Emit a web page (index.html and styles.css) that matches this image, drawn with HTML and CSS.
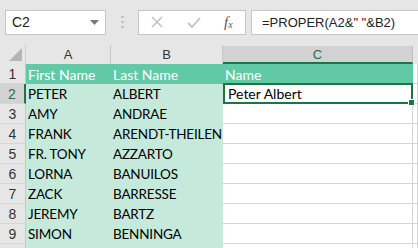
FILE: index.html
```html
<!DOCTYPE html>
<html lang="en">
<head>
  <meta charset="UTF-8">
  <title>PROPER</title>
  <link rel="stylesheet" href="styles.css">
</head>
<body>
  <!-- formula bar -->
  <div class="toolbar">
    <div class="namebox">
      <span>C2</span>
      <svg class="drop" width="9" height="5" viewBox="0 0 9 5"><path d="M0 0h9L4.5 5z" fill="#777"/></svg>
    </div>
    <div class="grip">
      <svg width="3" height="12" viewBox="0 0 3 12"><rect x="0.5" y="0" width="2" height="2" fill="#b5b5b5"/><rect x="0.5" y="5" width="2" height="2" fill="#b5b5b5"/><rect x="0.5" y="10" width="2" height="2" fill="#b5b5b5"/></svg>
    </div>
    <div class="fxbox">
      <svg class="btn" width="12" height="12" viewBox="0 0 12 12"><path d="M1 1L11 11M11 1L1 11" stroke="#c2c2c2" stroke-width="1.6"/></svg>
      <svg class="btn" width="14" height="11" viewBox="0 0 14 11"><path d="M1 6l4 4L13 1" stroke="#c2c2c2" stroke-width="1.8" fill="none"/></svg>
      <span class="fx">f<sub>x</sub></span>
    </div>
    <div class="formula">=PROPER(A2&amp;" "&amp;B2)</div>
  </div>

  <!-- sheet grid -->
  <div class="sheet">
    <div class="corner"><span class="tri"></span></div>
    <div class="colhead">A</div>
    <div class="colhead">B</div>
    <div class="colhead active">C</div>
    <div class="colhead rest"></div>

    <div class="rowhead">1</div>
    <div class="cell th">First Name</div>
    <div class="cell th">Last Name</div>
    <div class="cell th">Name</div>
    <div class="cell blank"></div>

    <div class="rowhead active">2</div>
    <div class="cell td">PETER</div>
    <div class="cell td">ALBERT</div>
    <div class="cell blank selected">Peter Albert</div>
    <div class="cell blank"></div>

    <div class="rowhead">3</div>
    <div class="cell td">AMY</div>
    <div class="cell td">ANDRAE</div>
    <div class="cell blank"></div>
    <div class="cell blank"></div>

    <div class="rowhead">4</div>
    <div class="cell td">FRANK</div>
    <div class="cell td">ARENDT-THEILEN</div>
    <div class="cell blank"></div>
    <div class="cell blank"></div>

    <div class="rowhead">5</div>
    <div class="cell td">FR. TONY</div>
    <div class="cell td">AZZARTO</div>
    <div class="cell blank"></div>
    <div class="cell blank"></div>

    <div class="rowhead">6</div>
    <div class="cell td">LORNA</div>
    <div class="cell td">BANUILOS</div>
    <div class="cell blank"></div>
    <div class="cell blank"></div>

    <div class="rowhead">7</div>
    <div class="cell td">ZACK</div>
    <div class="cell td">BARRESSE</div>
    <div class="cell blank"></div>
    <div class="cell blank"></div>

    <div class="rowhead">8</div>
    <div class="cell td">JEREMY</div>
    <div class="cell td">BARTZ</div>
    <div class="cell blank"></div>
    <div class="cell blank"></div>

    <div class="rowhead">9</div>
    <div class="cell td">SIMON</div>
    <div class="cell td">BENNINGA</div>
    <div class="cell blank"></div>
    <div class="cell blank"></div>

    <div class="rowhead"></div>
    <div class="cell td"></div>
    <div class="cell td"></div>
    <div class="cell blank"></div>
    <div class="cell blank"></div>
  </div>
</body>
</html>
```

FILE: styles.css
```css
body {
  margin: 0;
  background: #fff;
  font-family: Lato, "Liberation Sans", sans-serif;
  overflow: hidden;
  height: 248px;
}
.toolbar {
  display: flex;
  align-items: center;
  height: 44px;
  padding: 0 0 0 5px;
  background: #e6e6e6;
  box-sizing: border-box;
}
.namebox {
  display: flex;
  align-items: center;
  justify-content: space-between;
  width: 101px;
  height: 25px;
  box-sizing: border-box;
  background: #fff;
  border: 1px solid #c6c6c6;
  padding: 0 6px 0 6px;
  font-family: "Liberation Sans", sans-serif;
  font-size: 14px;
  color: #222;
}
.grip {
  width: 32px;
  display: flex;
  justify-content: center;
}
.fxbox {
  display: flex;
  align-items: center;
  width: 108px;
  height: 25px;
  box-sizing: border-box;
  background: #fff;
  border: 1px solid #c6c6c6;
  padding-left: 12px;
}
.fxbox .btn {
  margin-right: 24px;
}
.fxbox .btn + .btn {
  margin-right: 23px;
}
.fx {
  font-family: "Liberation Serif", serif;
  font-style: italic;
  font-size: 15px;
  color: #555;
}
.fx sub {
  font-size: 10px;
  vertical-align: -1px;
}
.formula {
  flex: 1;
  height: 25px;
  margin-left: 5px;
  box-sizing: border-box;
  background: #fff;
  border: 1px solid #c6c6c6;
  border-right: none;
  padding-left: 10px;
  line-height: 23px;
  font-family: "Liberation Sans", sans-serif;
  font-size: 13px;
  color: #222;
}
.sheet {
  display: grid;
  grid-template-columns: 26px 85px 112px 190px 1fr;
  grid-auto-rows: 20px;
  height: 204px;
  overflow: hidden;
  background: #e6e6e6;
}
.sheet > div {
  box-sizing: border-box;
}
.corner {
  display: flex;
  align-items: flex-end;
  justify-content: flex-end;
  padding: 0 3px 3px 0;
  border-right: 1px solid #cfcfcf;
}
.tri {
  width: 0;
  height: 0;
  border-left: 13px solid transparent;
  border-bottom: 13px solid #b4b4b4;
}
.colhead {
  display: flex;
  align-items: center;
  justify-content: center;
  margin-top: 1px;
  font-family: "Liberation Sans", sans-serif;
  font-size: 13px;
  color: #333;
  border-right: 1px solid #c8c8c8;
}
.colhead.active {
  margin-top: 2px;
  background: #d2d2d2;
  color: #217346;
  border-bottom: 2px solid #217346;
  border-right: 1px solid #bdbdbd;
}
.colhead.rest {
  border-right: none;
}
.rowhead {
  display: flex;
  align-items: center;
  justify-content: center;
  font-family: "Liberation Sans", sans-serif;
  font-size: 14px;
  color: #333;
  background: #e6e6e6;
  border-right: 1px solid #c8c8c8;
  border-bottom: 1px solid #d6d6d6;
}
.rowhead.active {
  background: #d2d2d2;
  color: #217346;
  border-right: 2px solid #217346;
}
.cell {
  display: flex;
  align-items: center;
  padding-left: 2px;
  font-size: 14px;
  white-space: nowrap;
  overflow: hidden;
}
.th {
  background: #62c9a7;
  color: #fff;
}
.td {
  background: #c5eadc;
  color: #000;
  font-size: 13.5px;
  letter-spacing: -0.2px;
}
.blank {
  background: #fff;
  color: #000;
  border-right: 1px solid #d4d4d4;
  border-bottom: 1px solid #d4d4d4;
}
.selected {
  position: relative;
  overflow: visible;
  padding-left: 3px;
  margin-top: -1px;
  border: 2px solid #217346;
}
.selected::after {
  content: "";
  position: absolute;
  right: -4px;
  bottom: -4px;
  width: 5px;
  height: 5px;
  background: #217346;
  border: 1px solid #fff;
}
```
